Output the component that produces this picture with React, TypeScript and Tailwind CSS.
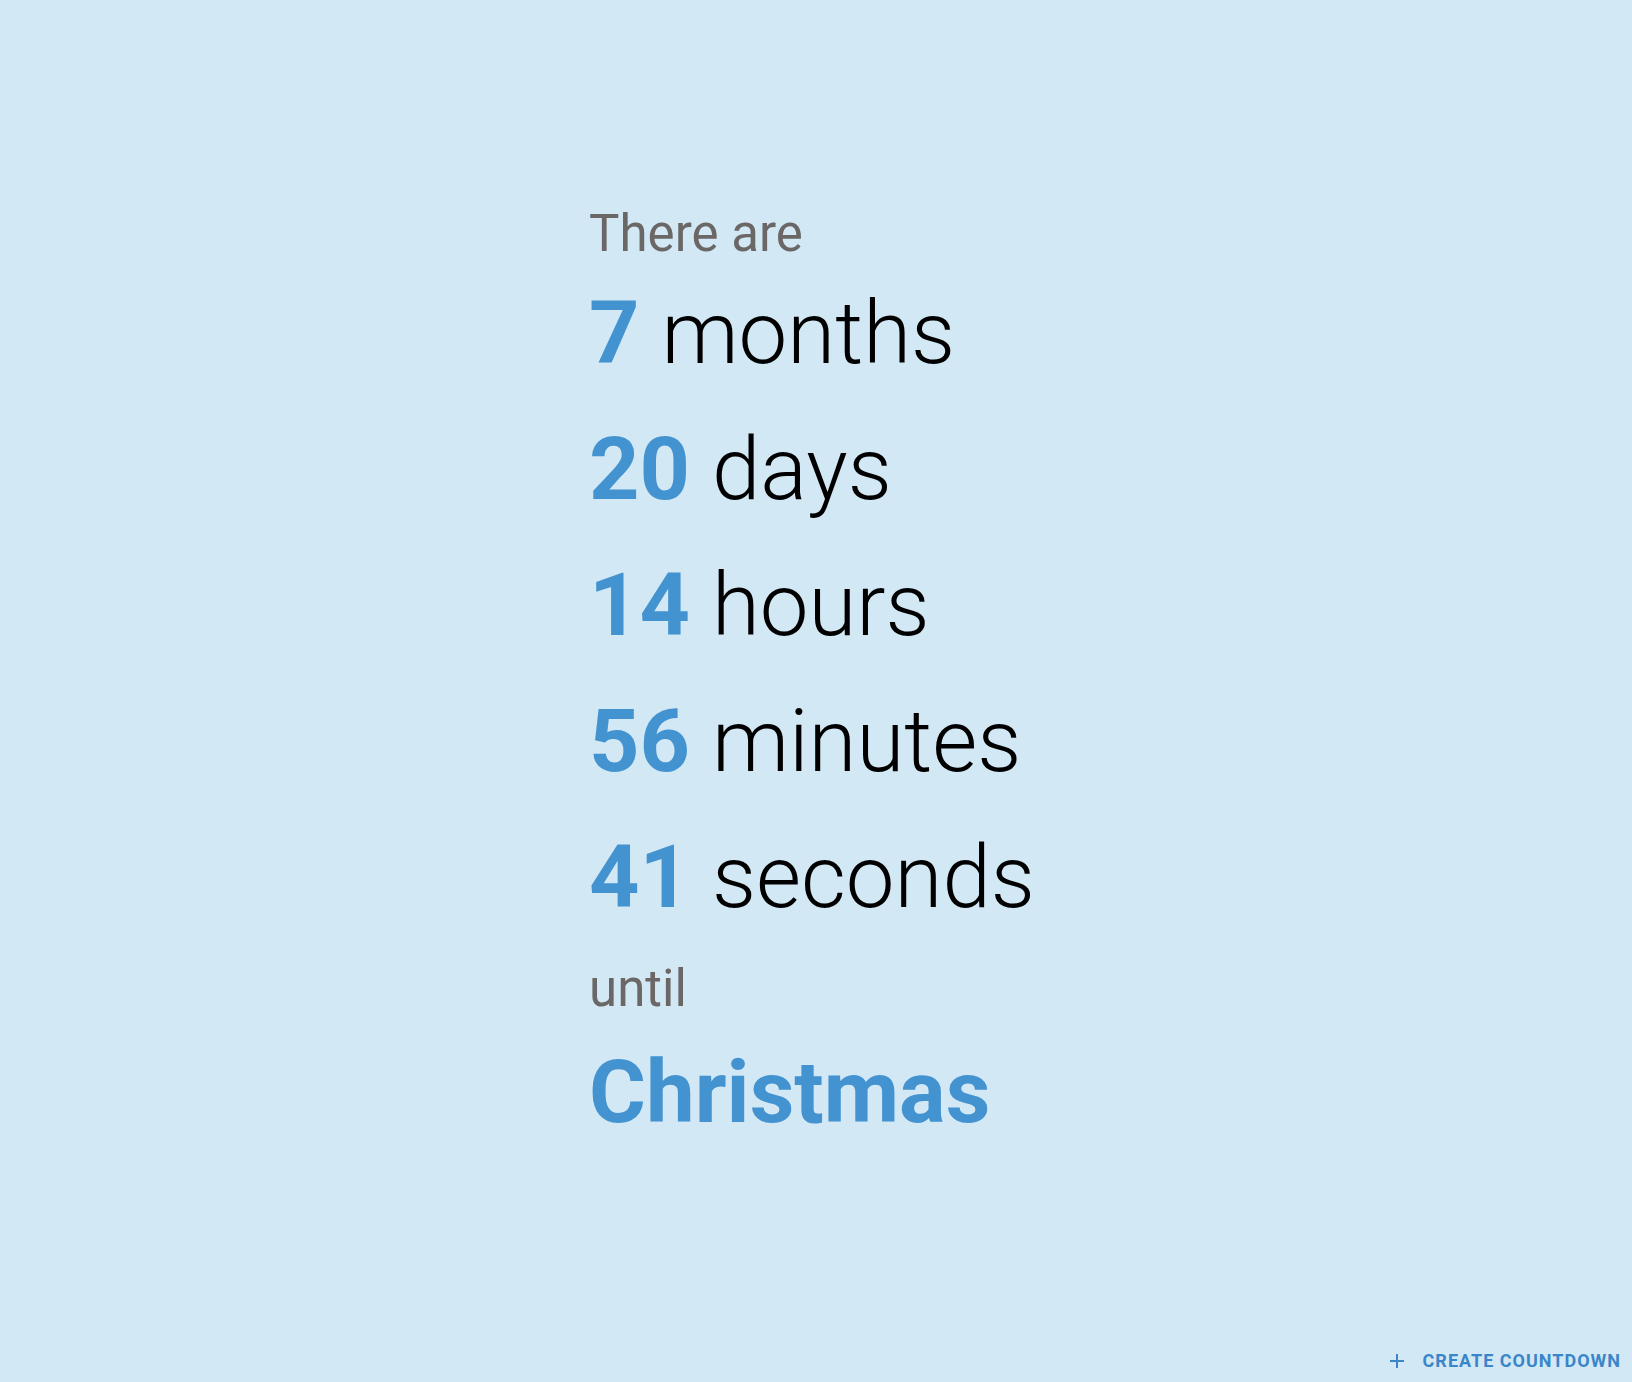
const units = [
  { value: 7, label: 'months' },
  { value: 20, label: 'days' },
  { value: 14, label: 'hours' },
  { value: 56, label: 'minutes' },
  { value: 41, label: 'seconds' },
]

export default function App() {
  return (
    <div className="h-[1382px] w-full bg-[#d3e8f5] flex flex-col font-['Roboto',sans-serif] overflow-hidden">
      {/* Countdown */}
      <main className="flex-1 flex justify-center pt-[203px] pr-[8px]">
        <div className="flex flex-col">
          <p className="text-[51px] leading-[62px] text-[#6b6767]">There are</p>
          {units.map((u) => (
            <p key={u.label} className="text-[88px] leading-[136px] text-black whitespace-nowrap">
              <span className="font-bold text-[#4493d1]">{u.value}</span>{' '}
              <span className="font-light text-[87px]">{u.label}</span>
            </p>
          ))}
          <p className="mt-[13px] text-[51px] leading-[62px] text-[#6b6767]">until</p>
          <p className="mt-[4px] text-[87px] leading-[136px] font-bold text-[#4493d1]">Christmas</p>
        </div>
      </main>

      {/* Footer action */}
      <div className="flex justify-end pr-[11px] pb-[11px]">
        <button className="flex items-center gap-[18px] text-[18px] leading-[20px] font-bold uppercase tracking-[1px] text-[#3a86c8]">
          <svg width="16" height="16" viewBox="0 0 16 16" fill="none" stroke="currentColor" strokeWidth="2">
            <line x1="8" y1="1" x2="8" y2="15" />
            <line x1="1" y1="8" x2="15" y2="8" />
          </svg>
          Create countdown
        </button>
      </div>
    </div>
  )
}
